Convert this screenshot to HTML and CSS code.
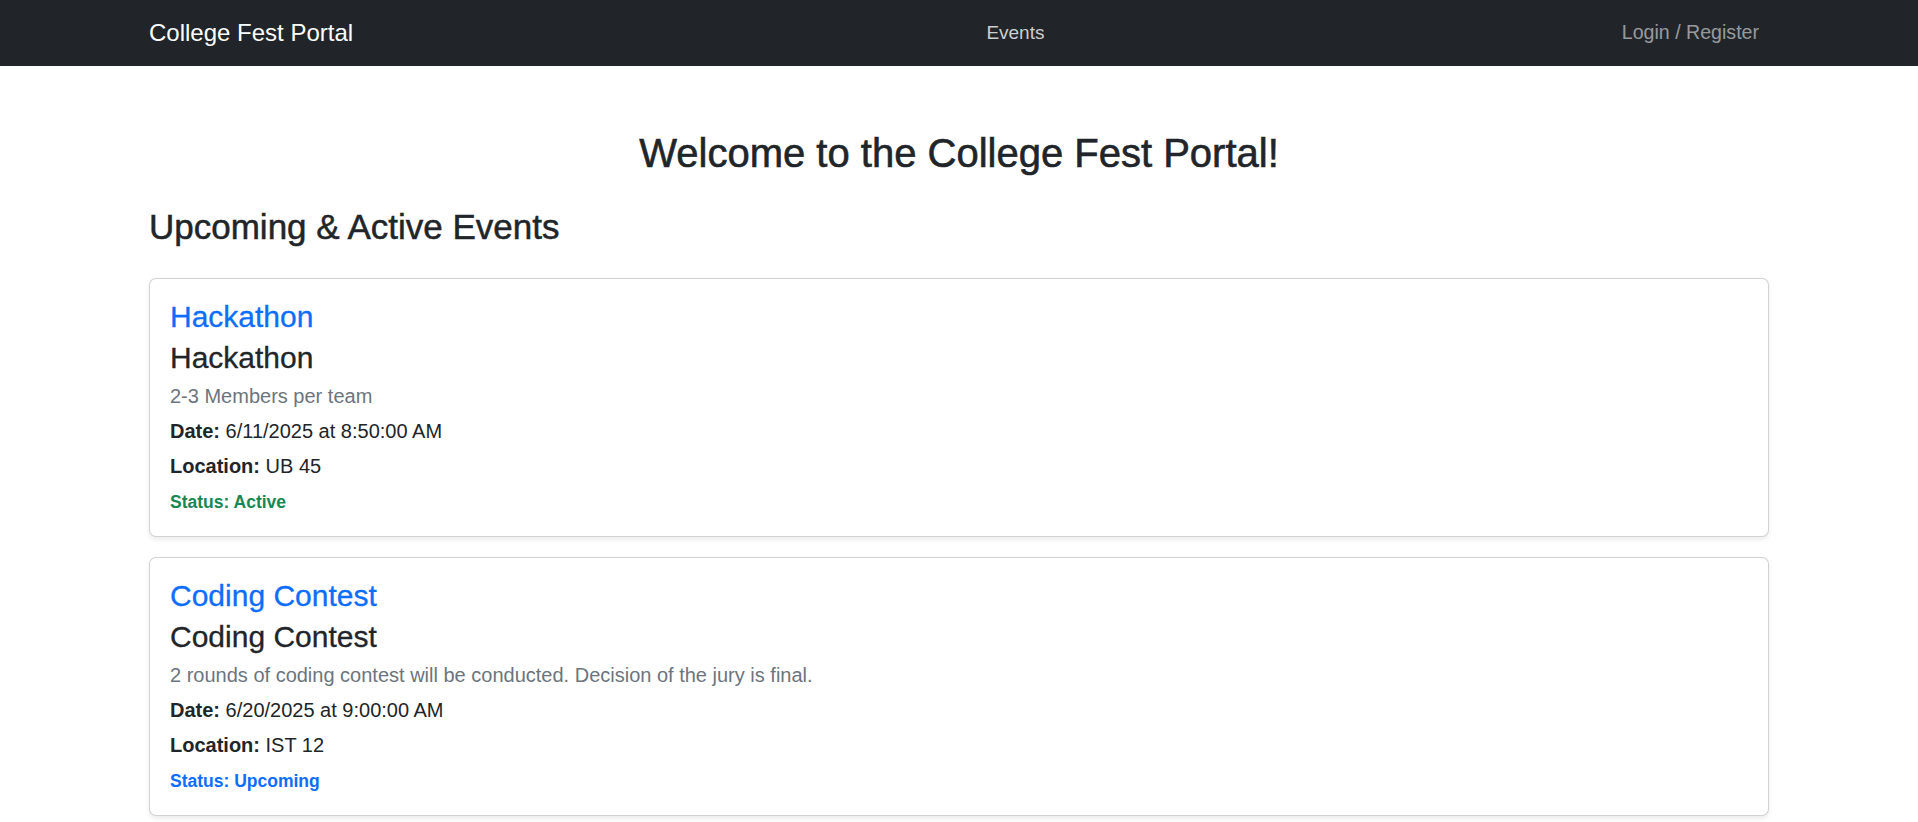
FILE: index.html
```html
<!DOCTYPE html>
<html lang="en">
<head>
<meta charset="utf-8">
<title>College Fest Portal</title>
<link rel="stylesheet" href="styles.css">
</head>
<body>
<nav class="navbar">
  <div class="nav-inner">
    <a class="brand" href="#">College Fest Portal</a>
    <ul class="nav-center">
      <li><a class="nav-link active" href="#">Events</a></li>
    </ul>
    <ul class="nav-right">
      <li><a class="nav-link login" href="#">Login / Register</a></li>
    </ul>
  </div>
</nav>

<main class="container">
  <h1 class="page-title">Welcome to the College Fest Portal!</h1>
  <h2 class="section-title">Upcoming &amp; Active Events</h2>

  <div class="card">
    <div class="card-body">
      <h4 class="card-title"><a href="#">Hackathon</a></h4>
      <h4 class="card-subtitle">Hackathon</h4>
      <p class="card-text muted">2-3 Members per team</p>
      <p class="card-text"><strong>Date:</strong> 6/11/2025 at 8:50:00 AM</p>
      <p class="card-text"><strong>Location:</strong> UB 45</p>
      <p class="card-text last"><small class="status active">Status: Active</small></p>
    </div>
  </div>

  <div class="card">
    <div class="card-body">
      <h4 class="card-title"><a href="#">Coding Contest</a></h4>
      <h4 class="card-subtitle">Coding Contest</h4>
      <p class="card-text muted">2 rounds of coding contest will be conducted. Decision of the jury is final.</p>
      <p class="card-text"><strong>Date:</strong> 6/20/2025 at 9:00:00 AM</p>
      <p class="card-text"><strong>Location:</strong> IST 12</p>
      <p class="card-text last"><small class="status upcoming">Status: Upcoming</small></p>
    </div>
  </div>
</main>
</body>
</html>
```

FILE: styles.css
```css
* {
  box-sizing: border-box;
}

html, body {
  margin: 0;
  padding: 0;
}

body {
  font-family: "Liberation Sans", Arial, sans-serif;
  font-size: 20px;
  line-height: 1.5;
  color: #212529;
  background: #fff;
}

a {
  text-decoration: none;
}

.navbar {
  background: #212529;
  height: 66px;
}

.nav-inner {
  max-width: 1650px;
  margin: 0 auto;
  padding: 0 15px;
  height: 100%;
  display: flex;
  align-items: center;
}

.brand {
  color: #fff;
  font-size: 24px;
  line-height: 1.5;
  margin-right: 20px;
}

.nav-center,
.nav-right {
  list-style: none;
  margin: 0;
  padding: 0;
  display: flex;
}

.nav-center {
  flex: 1;
  justify-content: center;
  padding-left: 46px;
}

.nav-link {
  display: block;
  padding: 10px;
  font-size: 19px;
  line-height: 1.5;
  color: rgba(255, 255, 255, 0.55);
}

.nav-link.login {
  font-size: 19.6px;
}

.nav-link.active {
  color: rgba(255, 255, 255, 0.78);
}

.container {
  max-width: 1650px;
  margin: 0 auto;
  padding: 63px 15px 20px;
}

.page-title {
  font-size: 40px;
  font-weight: 500;
  line-height: 1.2;
  text-align: center;
  margin: 0 0 29px;
  -webkit-text-stroke: 0.6px currentColor;
}

.section-title {
  font-size: 35px;
  font-weight: 500;
  line-height: 1.2;
  margin: 0 0 30px;
  -webkit-text-stroke: 0.5px currentColor;
}

.card {
  border: 1px solid rgba(0, 0, 0, 0.175);
  border-radius: 7px;
  box-shadow: 0 2.5px 5px rgba(0, 0, 0, 0.075);
  background: #fff;
  margin-bottom: 20px;
}

.card-body {
  padding: 20px;
}

.card-title,
.card-subtitle {
  font-size: 30px;
  font-weight: 500;
  line-height: 1.2;
  margin: 0 0 5px;
  -webkit-text-stroke: 0.3px currentColor;
}

.card-title a {
  color: #0d6efd;
}

.card-text {
  margin: 0 0 5px;
}

.card-text.last {
  margin-bottom: 0;
}

.card-text strong {
  font-weight: 700;
}

.muted {
  color: #6c757d;
}

.status {
  font-size: 17.5px;
  font-weight: 700;
}

.status.active {
  color: #198754;
}

.status.upcoming {
  color: #0d6efd;
}
```
